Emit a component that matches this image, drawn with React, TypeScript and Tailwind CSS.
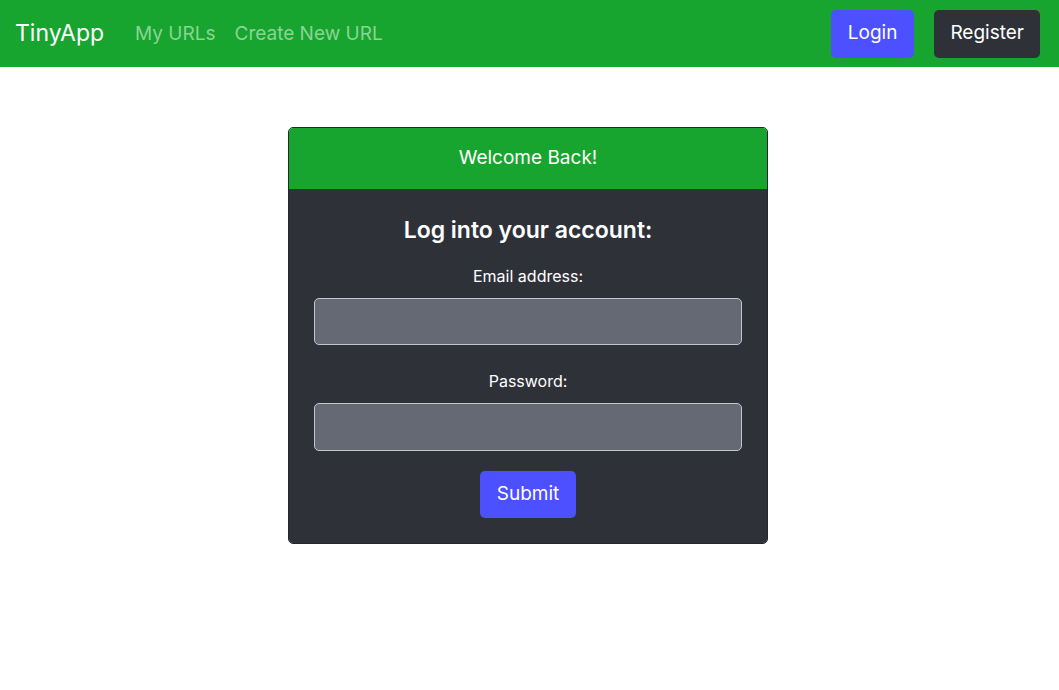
import { useState } from 'react';

const NavBar = () => (
	<nav className="flex h-[67px] items-center bg-[#17a52f] px-[15px]">
		<span className="mr-[31px] text-[23px] leading-none text-white">TinyApp</span>
		<div className="flex items-center gap-[19px] text-[19px] leading-none text-[#8bd495]">
			<a href="#">My URLs</a>
			<a href="#">Create New URL</a>
		</div>
		<div className="ml-auto flex items-center gap-[20px] pr-[4px]">
			<button
				type="button"
				className="h-[48px] rounded-[5px] bg-[#4c50ff] px-[17px] text-[19px] text-white"
			>
				Login
			</button>
			<button
				type="button"
				className="h-[48px] rounded-[5px] bg-[#2f3139] px-[16px] text-[19px] text-white"
			>
				Register
			</button>
		</div>
	</nav>
);

export default function App() {
	const [email, setEmail] = useState('');
	const [password, setPassword] = useState('');

	return (
		<div className="min-h-[690px] bg-white font-['Inter',sans-serif]">
			<NavBar />
			<main className="flex justify-center pr-[3px] pt-[60px]">
				<div className="w-[480px] overflow-hidden rounded-[5px] border border-[#25272d]">
					<div className="flex h-[61px] items-center justify-center bg-[#17a52f] text-[19px] text-white">
						Welcome Back!
					</div>
					<form
						className="flex flex-col items-center bg-[#2f3139] px-[25px] pb-[25px] pt-[27px] text-white"
						onSubmit={(e) => e.preventDefault()}
					>
						<h4 className="text-[23px] font-semibold leading-[29px]">
							Log into your account:
						</h4>
						<label className="mt-[19px] text-[16px] leading-[25px]">Email address:</label>
						<input
							type="email"
							value={email}
							onChange={(e) => setEmail(e.target.value)}
							className="mt-[9px] h-[47px] w-full rounded-[5px] border border-[#c3c6cb] bg-[#646973] px-3 text-white outline-none"
						/>
						<label className="mt-[24px] text-[16px] leading-[25px]">Password:</label>
						<input
							type="password"
							value={password}
							onChange={(e) => setPassword(e.target.value)}
							className="mt-[9px] h-[48px] w-full rounded-[5px] border border-[#c3c6cb] bg-[#646973] px-3 text-white outline-none"
						/>
						<button
							type="submit"
							className="mt-[20px] h-[47px] rounded-[5px] bg-[#4c50ff] px-[17px] text-[19px] text-white"
						>
							Submit
						</button>
					</form>
				</div>
			</main>
		</div>
	);
}
